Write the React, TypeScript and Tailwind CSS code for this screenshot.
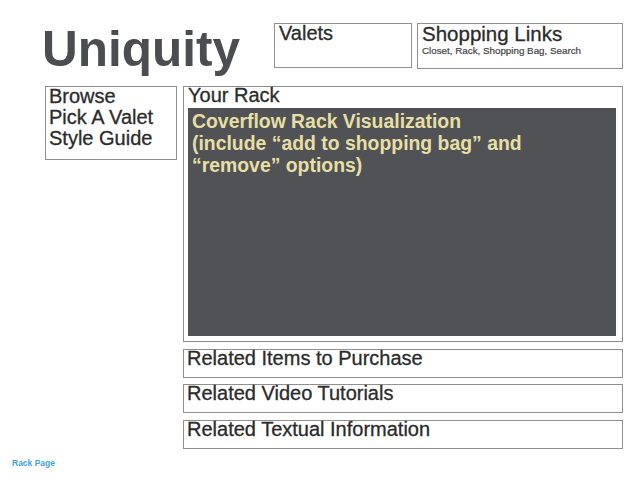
const font = { fontFamily: '"Liberation Sans", Arial, Helvetica, sans-serif' }

const related = ["Related Items to Purchase", "Related Video Tutorials", "Related Textual Information"]

export default function App() {
  return (
    <div className="relative w-[640px] h-[480px] bg-white text-[#2b2b2b] pt-[23px]" style={font}>
      {/* Header row */}
      <div className="flex items-start h-[45px] pl-[42px]">
        <div className="w-[232px] mt-[2px] text-[49.5px] leading-[48px] font-bold text-[#4c4d51] whitespace-nowrap">
          Uniquity
        </div>
        <div className="w-[138px] h-[45px] border border-[#8f8f8f] pl-[4px] pt-[1px] text-[20px] leading-[17px] [-webkit-text-stroke:0.3px]">
          Valets
        </div>
        <div className="ml-[5px] w-[206px] h-[46px] border border-[#8f8f8f] pl-[4px] pt-[1px]">
          <div className="text-[20.5px] leading-[17px] [-webkit-text-stroke:0.3px]">Shopping Links</div>
          <div className="mt-[3px] text-[9.8px] leading-[12px] text-[#444] [-webkit-text-stroke:0.2px]">
            Closet, Rack, Shopping Bag, Search
          </div>
        </div>
      </div>

      {/* Body */}
      <div className="flex items-start gap-[6px] pl-[45px] mt-[18px]">
        <div className="w-[132px] h-[74px] border border-[#8f8f8f] pl-[3px]">
          <div className="-mt-[1px] text-[20px] leading-[21px] [-webkit-text-stroke:0.3px]">
            <div>Browse</div>
            <div>Pick A Valet</div>
            <div>Style Guide</div>
          </div>
        </div>

        <div className="w-[440px] flex flex-col">
          <div className="h-[256px] border border-[#8f8f8f] pl-[4px] pr-[6px] pb-[5px] flex flex-col">
            <div className="text-[20px] leading-[17px] [-webkit-text-stroke:0.3px]">Your Rack</div>
            <div className="mt-[4px] flex-1 bg-[#505256] pl-[4px] pt-[2px]">
              <p className="text-[19.4px] leading-[22px] font-bold text-[#e7dfa3]">
                Coverflow Rack Visualization
                <br />
                (include “add to shopping bag” and
                <br />
                “remove” options)
              </p>
            </div>
          </div>

          {related.map((label, i) => (
            <div
              key={label}
              className={`h-[29px] border border-[#8f8f8f] pl-[3px] text-[20px] leading-[17px] [-webkit-text-stroke:0.3px] ${i === 1 ? "mt-[6px]" : "mt-[7px]"}`}
            >
              {label}
            </div>
          ))}
        </div>
      </div>

      <div className="pl-[12px] mt-[10px] text-[8.5px] leading-[8px] font-bold text-[#3ea3dc]">Rack Page</div>
    </div>
  )
}
